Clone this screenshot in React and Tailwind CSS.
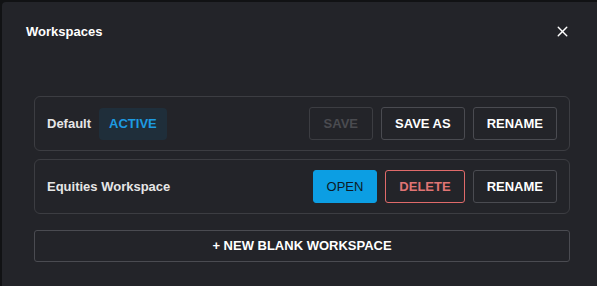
import React from 'react';
import { X } from 'lucide-react';

const btn = "h-[33px] px-[13px] rounded-[3px] border text-[13px] font-bold uppercase leading-none flex items-center";

const WorkspaceRow = ({ children }) => (
  <div className="flex items-center justify-between h-[55px] px-[12px] rounded-[6px] border border-[#3c3d42]">
    {children[0]}
    <div className="flex items-center gap-[8px]">{children[1]}</div>
  </div>
);

export default function App() {
  return (
    <div className="w-[597px] h-[286px] bg-[#111214] pt-[2px] pl-[2px] overflow-hidden" style={{ fontFamily: '"Liberation Sans", Arial, sans-serif' }}>
      <div className="w-[600px] h-full bg-[#232429] rounded-tl-[4px] text-[#ececec]">
        {/* header */}
        <div className="flex items-center justify-between h-[58px] pl-[24px] pr-[31px] pt-[1px]">
          <h2 className="text-[13px] font-bold text-white">Workspaces</h2>
          <button className="text-white">
            <X size={17} strokeWidth={2} />
          </button>
        </div>

        <div className="px-[32px] pt-[36px] flex flex-col gap-[8px]">
          <WorkspaceRow>
            <div className="flex items-center gap-[8px]">
              <span className="text-[13px] font-bold text-[#e6e6e6]">Default</span>
              <span className="h-[32px] px-[10px] rounded-[4px] bg-[#1f2e3a] text-[#1d9be2] text-[13px] font-bold flex items-center">ACTIVE</span>
            </div>
            <>
              <button className={`${btn} px-[14px] border-[#3c3d42] text-[#4a4b50]`}>Save</button>
              <button className={`${btn} px-[11px] border-[#4a4b51] text-white`}>Save as</button>
              <button className={`${btn} border-[#4a4b51] text-white`}>Rename</button>
            </>
          </WorkspaceRow>

          <WorkspaceRow>
            <span className="text-[13px] font-bold text-[#e6e6e6]">Equities Workspace</span>
            <>
              <button className={`${btn} border-[#0c9ee3] bg-[#0c9ee3] text-[#0d1b26] !font-normal`}>Open</button>
              <button className={`${btn} px-[12px] border-[#e06a6a] text-[#e07474]`}>Delete</button>
              <button className={`${btn} border-[#4a4b51] text-white`}>Rename</button>
            </>
          </WorkspaceRow>

          <button className="mt-[8px] h-[32px] w-full rounded-[3px] border border-[#4a4b51] text-[13px] font-bold text-white uppercase flex items-center justify-center">
            + New blank workspace
          </button>
        </div>
      </div>
    </div>
  );
}
